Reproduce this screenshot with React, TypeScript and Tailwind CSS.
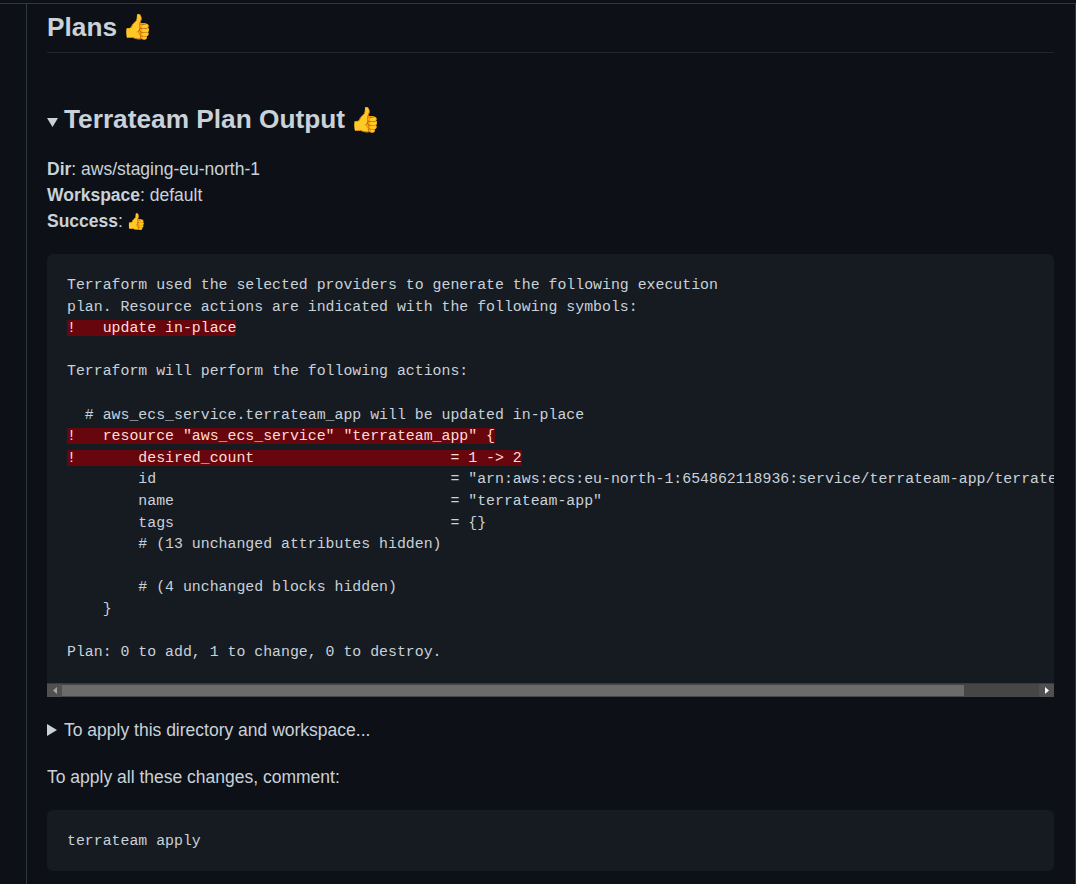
const planLines: { text: string; changed?: boolean }[] = [
  { text: "Terraform used the selected providers to generate the following execution" },
  { text: "plan. Resource actions are indicated with the following symbols:" },
  { text: "!   update in-place", changed: true },
  { text: "" },
  { text: "Terraform will perform the following actions:" },
  { text: "" },
  { text: "  # aws_ecs_service.terrateam_app will be updated in-place" },
  { text: '!   resource "aws_ecs_service" "terrateam_app" {', changed: true },
  { text: "!       desired_count                      = 1 -> 2", changed: true },
  { text: '        id                                 = "arn:aws:ecs:eu-north-1:654862118936:service/terrateam-app/terrateam-app"' },
  { text: '        name                               = "terrateam-app"' },
  { text: "        tags                               = {}" },
  { text: "        # (13 unchanged attributes hidden)" },
  { text: "" },
  { text: "        # (4 unchanged blocks hidden)" },
  { text: "    }" },
  { text: "" },
  { text: "Plan: 0 to add, 1 to change, 0 to destroy." },
];

function Thumb({ className }: { className: string }) {
  return <span className={className}>👍</span>;
}

export default function App() {
  return (
    <div className="h-[884px] overflow-hidden bg-[#0d1117] pt-[3px] font-['Liberation_Sans',sans-serif] text-[17.5px] leading-[26.25px] text-[#c9d1d9]">
      <div className="h-full border-t border-r border-[#30363d]">
        <div className="ml-[26px] h-full border-l border-[#30363d] pr-[21px] pl-[20px]">
          <h2 className="flex h-[49px] items-center gap-[5px] border-b border-[#21262d] pb-[2px] text-[26.25px] font-bold">
            Plans <Thumb className="text-[24.5px]" />
          </h2>

          {/* plan output section */}
          <div className="mt-[50px] flex items-center text-[26.25px] leading-[33px] font-bold">
            <svg width="11" height="9" viewBox="0 0 11 9" className="mt-[6px] mr-[6px]">
              <path d="M0 0h11L5.5 9z" fill="#c9d1d9" />
            </svg>
            <span>Terrateam Plan Output</span>
            <Thumb className="ml-[5px] text-[24.5px]" />
          </div>

          <p className="mt-[20px] leading-[26px]">
            <b>Dir</b>: aws/staging-eu-north-1
            <br />
            <b>Workspace</b>: default
            <br />
            <b>Success</b>: <Thumb className="ml-[-1.5px] text-[16px] leading-none" />
          </p>

          <div className="mt-[20px] overflow-hidden rounded-t-[6px] bg-[#161b22]">
            <pre className="overflow-hidden pt-[21px] pb-[19px] pl-[20px] font-['Liberation_Mono',monospace] text-[14.875px] leading-[21.6px]">
              {planLines.map((line, i) => (
                <div key={i} className="h-[21.6px] whitespace-pre">
                  {line.changed ? (
                    <span className="bg-[#67060c] text-[#ffdcd7]">{line.text}</span>
                  ) : (
                    line.text
                  )}
                </div>
              ))}
            </pre>
            {/* scrollbar as drawn by the browser */}
            <div className="flex h-[14px] items-stretch border-t border-[#3c3c3c] bg-[#464646]">
              <div className="flex w-[15px] items-center justify-center bg-[#505050]">
                <svg width="4" height="7" viewBox="0 0 4 7">
                  <path d="M4 0v7L0 3.5z" fill="#a3a3a3" />
                </svg>
              </div>
              <div className="my-[1px] w-[902px] bg-[#6b6b6b]" />
              <div className="flex-1" />
              <div className="flex w-[15px] items-center justify-center bg-[#505050]">
                <svg width="4" height="7" viewBox="0 0 4 7">
                  <path d="M0 0v7l4-3.5z" fill="#ffffff" />
                </svg>
              </div>
            </div>
          </div>

          <div className="mt-[20px] flex items-center">
            <svg width="10" height="12" viewBox="0 0 10 12" className="mr-[7px]">
              <path d="M0 0v12l10-6z" fill="#c9d1d9" />
            </svg>
            <span>To apply this directory and workspace...</span>
          </div>

          <p className="mt-[21px]">To apply all these changes, comment:</p>

          <pre className="mt-[20px] rounded-[6px] bg-[#161b22] pt-[21px] pb-[18px] pl-[20px] font-['Liberation_Mono',monospace] text-[14.875px] leading-[21.6px]">
            terrateam apply
          </pre>
        </div>
      </div>
    </div>
  );
}
